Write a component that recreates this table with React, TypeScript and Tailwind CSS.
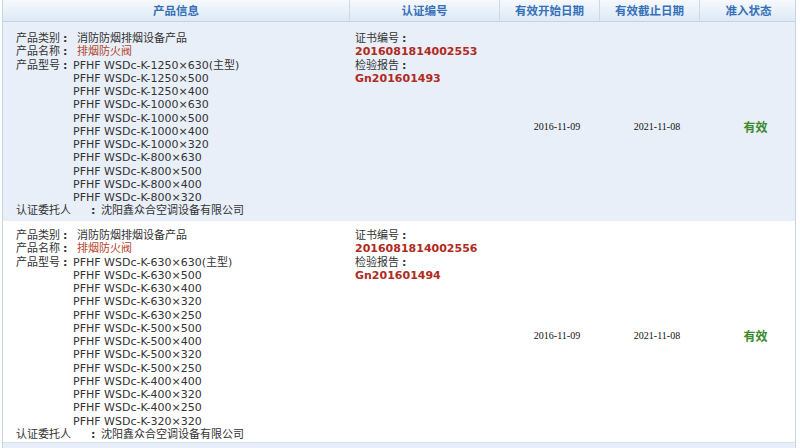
import React from "react";

type Cert = {
  category: string;
  name: string;
  models: string[];
  client: string;
  certNo: string;
  reportNo: string;
  start: string;
  end: string;
  status: string;
};

const certs: Cert[] = [
  {
    category: "消防防烟排烟设备产品",
    name: "排烟防火阀",
    models: [
      "PFHF WSDc-K-1250×630(主型)",
      "PFHF WSDc-K-1250×500",
      "PFHF WSDc-K-1250×400",
      "PFHF WSDc-K-1000×630",
      "PFHF WSDc-K-1000×500",
      "PFHF WSDc-K-1000×400",
      "PFHF WSDc-K-1000×320",
      "PFHF WSDc-K-800×630",
      "PFHF WSDc-K-800×500",
      "PFHF WSDc-K-800×400",
      "PFHF WSDc-K-800×320",
    ],
    client: "沈阳鑫众合空调设备有限公司",
    certNo: "2016081814002553",
    reportNo: "Gn201601493",
    start: "2016-11-09",
    end: "2021-11-08",
    status: "有效",
  },
  {
    category: "消防防烟排烟设备产品",
    name: "排烟防火阀",
    models: [
      "PFHF WSDc-K-630×630(主型)",
      "PFHF WSDc-K-630×500",
      "PFHF WSDc-K-630×400",
      "PFHF WSDc-K-630×320",
      "PFHF WSDc-K-630×250",
      "PFHF WSDc-K-500×500",
      "PFHF WSDc-K-500×400",
      "PFHF WSDc-K-500×320",
      "PFHF WSDc-K-500×250",
      "PFHF WSDc-K-400×400",
      "PFHF WSDc-K-400×320",
      "PFHF WSDc-K-400×250",
      "PFHF WSDc-K-320×320",
    ],
    client: "沈阳鑫众合空调设备有限公司",
    certNo: "2016081814002556",
    reportNo: "Gn201601494",
    start: "2016-11-09",
    end: "2021-11-08",
    status: "有效",
  },
];

const cols = "grid grid-cols-[347px_150px_100px_100px_97px]";

function Label({ text, w }: { text: string; w: string }) {
  return (
    <>
      <span className={`inline-block shrink-0 whitespace-nowrap ${w} text-[11px]`}>{text}</span>
      <span className="inline-block w-[4px] shrink-0 text-center text-[11px] font-bold">:</span>
    </>
  );
}

export default function App() {
  return (
    <div
      className="w-[800px] h-[448px] bg-white overflow-hidden text-[#333]"
      style={{ fontFamily: '"DejaVu Sans", "Noto Sans CJK SC", sans-serif' }}
    >
      <div className="ml-[2px] w-[794px] border-x border-[#c6d6e7]">
        {/* Header */}
        <div
          className={`${cols} h-[22px] bg-linear-to-b from-[#f6f9fd] to-[#dde9f5] border-b border-[#c3d4e7] text-[11.5px] font-bold text-[#3570b8]`}
          style={{ fontFamily: '"Noto Sans CJK SC", sans-serif' }}
        >
          {["产品信息", "认证编号", "有效开始日期", "有效截止日期", "准入状态"].map((h, i) => (
            <div
              key={h}
              className={`flex items-center justify-center leading-none ${
                i < 4 ? "border-r border-[#c9d9ea]" : ""
              }`}
            >
              {h}
            </div>
          ))}
        </div>

        {certs.map((c, idx) => (
          <div
            key={c.certNo}
            className={`${cols} ${
              idx === 0 ? "bg-[#e8eff8] h-[199px] pt-[10px]" : "bg-white h-[221px] pt-[8px]"
            }`}
          >
            {/* product info */}
            <div className="pl-[13px] leading-[13.25px] text-[11px]">
              <div className="flex">
                <Label text="产品类别" w="w-[47px]" />
                <span className="ml-[10px]">{c.category}</span>
              </div>
              <div className="flex">
                <Label text="产品名称" w="w-[47px]" />
                <span className="ml-[10px] text-[#b5442e]">{c.name}</span>
              </div>
              <div className="flex">
                <Label text="产品型号" w="w-[47px]" />
                <div className="ml-[6px] flex flex-col">
                  {c.models.map((m) => (
                    <span key={m} className="whitespace-nowrap">
                      {m}
                    </span>
                  ))}
                </div>
              </div>
              <div className="flex">
                <Label text="认证委托人" w="w-[75px]" />
                <span className="ml-[6px] whitespace-nowrap">{c.client}</span>
              </div>
            </div>

            {/* cert numbers */}
            <div className="pl-[5px] leading-[13.25px] text-[11px]">
              <div className="flex">
                <span className="w-[47px]">证书编号</span>
                <span className="font-bold">:</span>
              </div>
              <div className="font-bold text-[#b02a22]">{c.certNo}</div>
              <div className="flex">
                <span className="w-[47px]">检验报告</span>
                <span className="font-bold">:</span>
              </div>
              <div className="font-bold text-[#b02a22]">{c.reportNo}</div>
            </div>

            <div
              className="flex items-center justify-center pl-[14px] text-[10px] text-[#111]"
              style={{ fontFamily: '"Liberation Serif", serif' }}
            >
              {c.start}
            </div>
            <div
              className="flex items-center justify-center pl-[14px] text-[10px] text-[#111]"
              style={{ fontFamily: '"Liberation Serif", serif' }}
            >
              {c.end}
            </div>
            <div
              className="flex items-center justify-center pl-[14px] text-[12px] font-bold text-[#3c8a2c]"
              style={{ fontFamily: '"Noto Sans CJK SC", sans-serif' }}
            >
              {c.status}
            </div>
          </div>
        ))}
        <div className="h-[10px] bg-[#e8eff8] border-t border-[#d5e1ee]" />
      </div>
    </div>
  );
}
